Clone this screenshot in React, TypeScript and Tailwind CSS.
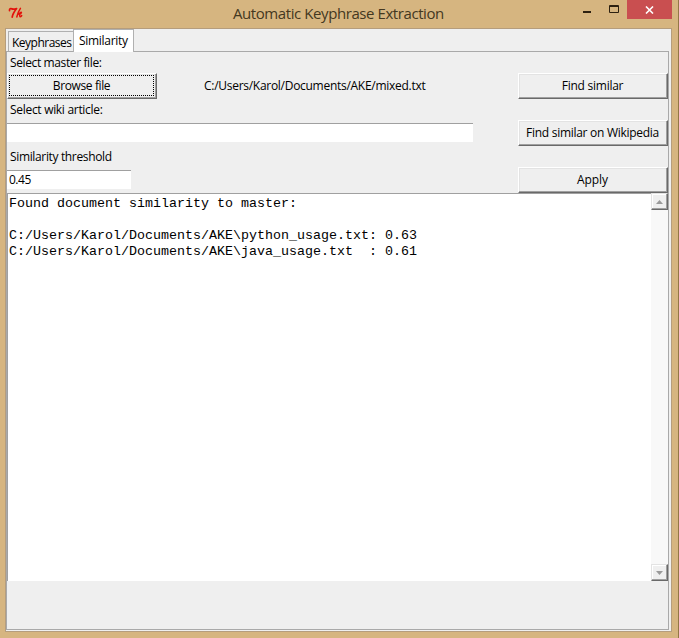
import type { ReactNode } from "react";

const results = [
  "Found document similarity to master:",
  "",
  "C:/Users/Karol/Documents/AKE\\python_usage.txt: 0.63",
  "C:/Users/Karol/Documents/AKE\\java_usage.txt  : 0.61",
];

function TkLogo() {
  return (
    <svg width="16" height="13" viewBox="0 0 16 13" fill="none" stroke="#e3120b" strokeLinecap="round" strokeLinejoin="round">
      <path d="M1.5 3.6C1.3 1.6 2.5 1.5 4 1.9C5.5 2.3 6.8 2 8.6 1.5C6.6 4 4.6 7 4.2 10.2" strokeWidth="1.7" />
      <path d="M12.4 1.3C10.7 3.8 9.5 6.8 8.8 10M9.8 7.4C11.2 6.8 12.4 5.2 13.3 5.3C13.9 6 12.3 7.1 11.2 7.4C12.1 7.9 11.4 9.5 12.2 9.8C12.9 9.8 13.2 9.2 13.7 8.6" strokeWidth="1.5" />
    </svg>
  );
}

function Button({ children, focused = false, tracking }: { children: ReactNode; focused?: boolean; tracking: string }) {
  return (
    <button className="flex h-[26px] w-[150px] shrink-0 border border-t-white border-l-white border-r-[#696969] border-b-[#696969] bg-[#efefef] pt-px pr-[2px] pb-[2px] pl-px shadow-[inset_-1px_-1px_0_#a0a0a0,inset_1px_1px_0_#e3e3e3]">
      <span className={`flex h-full w-full items-center justify-center whitespace-nowrap leading-4 ${tracking} ${focused ? "border border-dotted border-black" : ""}`}>
        {children}
      </span>
    </button>
  );
}

function ScrollButton({ down = false }: { down?: boolean }) {
  return (
    <button className="flex h-[17px] w-[17px] items-center justify-center border border-t-[#e3e3e3] border-l-[#e3e3e3] border-r-[#696969] border-b-[#696969] bg-[#efefef] shadow-[inset_-1px_-1px_0_#a0a0a0,inset_1px_1px_0_#ffffff]">
      <svg width="7" height="4" viewBox="0 0 7 4" fill="#999">
        <path d={down ? "M0 0H7L3.5 4Z" : "M0 4H7L3.5 0Z"} />
      </svg>
    </button>
  );
}

export default function App() {
  return (
    <div className="flex h-[638px] w-[679px] flex-col border-r border-[#927746] bg-[#d6b580] font-['Open_Sans',sans-serif] text-[12px] text-black">
      <header className="flex h-[28px] shrink-0 items-start text-[#443820]">
        <div className="w-[100px] pt-[7px] pl-[8px]"><TkLogo /></div>
        <h1 className="h-[28px] flex-1 pl-[133px] text-[15px] leading-[27px] font-normal tracking-[-0.42px] whitespace-nowrap">Automatic Keyphrase Extraction</h1>
        <div className="flex">
          <svg className="mr-[7px]" width="39" height="19" viewBox="0 0 39 19" fill="none" stroke="#2d2111">
            <path d="M2 12H10" strokeWidth="2" />
            <path d="M28.5 5.5H37.5V12.5H28.5Z M29 6.5H37" strokeWidth="1" />
          </svg>
          <div className="mr-[6px] flex h-[19px] w-[45px] items-center justify-center bg-[#c94f50]">
            <svg width="9" height="8" viewBox="0 0 9 8" stroke="white" strokeWidth="1.6"><path d="M1 0.5L8 7.5M8 0.5L1 7.5" /></svg>
          </div>
        </div>
      </header>

      <main className="ml-[5px] flex h-[604px] w-[667px] flex-col border border-[#b59d7d] bg-[#efefef]">
        <nav className="flex h-[22px] shrink-0 items-end pl-[2px]">
          <div className="h-[20px] w-[65px] border-t border-l border-[#b0b0b0] pl-[3px] leading-[22px] tracking-[-0.5px] whitespace-nowrap">Keyphrases</div>
          <div className="z-10 -mb-px h-[23px] w-[61px] border-t border-r border-l border-[#b0b0b0] bg-white pl-[5px] leading-[22px] tracking-[-0.3px] whitespace-nowrap">Similarity</div>
        </nav>
        <section className="flex h-[579px] w-[663px] flex-col border border-[#a9a9a9]">
          <div className="h-[21px] pl-[3px] leading-[21px] tracking-[-0.38px]">Select master file:</div>
          <div className="flex h-[26px]">
            <Button focused tracking="tracking-[-0.38px]">Browse file</Button>
            <div className="flex-1 pl-[47px] leading-[25px] tracking-[-0.28px]">C:/Users/Karol/Documents/AKE/mixed.txt</div>
            <Button tracking="tracking-[-0.25px]">Find similar</Button>
          </div>
          <div className="h-[21px] pl-[3px] leading-[21px] tracking-[-0.3px]">Select wiki article:</div>
          <div className="flex h-[26px] items-center justify-between">
            <div className="-mt-px h-[19px] w-[466px] border-t border-[#a0a0a0] bg-white" />
            <Button tracking="tracking-[-0.28px]">Find similar on Wikipedia</Button>
          </div>
          <div className="h-[21px] pl-[3px] leading-[21px] tracking-[-0.35px]">Similarity threshold</div>
          <div className="flex h-[26px] items-center justify-between">
            <div className="-mt-px h-[19px] w-[124px] border-t border-[#a0a0a0] bg-white pl-[2px] leading-[18px] tracking-[-0.5px]">0.45</div>
            <Button tracking="tracking-[-0.1px]">Apply</Button>
          </div>
          <div className="flex h-[388px]">
            <pre className="h-full flex-1 border-t border-l border-[#a0a0a0] bg-white pt-[2px] pl-px font-['Liberation_Mono',monospace] text-[13.333px] leading-4">{results.join("\n")}</pre>
            <div className="flex w-[17px] flex-col justify-between bg-[#f8f8f8]">
              <ScrollButton />
              <ScrollButton down />
            </div>
          </div>
        </section>
      </main>
    </div>
  );
}
